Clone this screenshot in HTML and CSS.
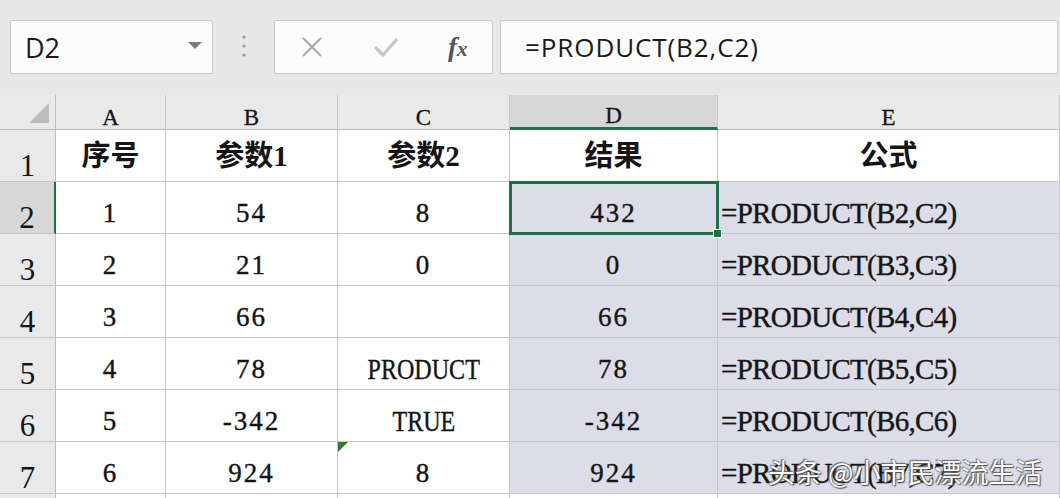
FILE: index.html
```html
<!DOCTYPE html>
<html lang="zh">
<head>
<meta charset="utf-8">
<title>PRODUCT</title>
<link rel="stylesheet" href="styles.css">
</head>
<body>
<div class="app">
  <div class="toolbar">
    <div class="namebox">
      <span class="name">D2</span>
      <svg class="caret" width="14" height="7" viewBox="0 0 14 7"><path d="M0 0 H14 L7 7 Z" fill="#7a7a7a"/></svg>
    </div>
    <div class="grip">
      <svg width="4" height="24" viewBox="0 0 4 24"><circle cx="2" cy="2" r="1.6" fill="#9a9a9a"/><circle cx="2" cy="11" r="1.6" fill="#9a9a9a"/><circle cx="2" cy="20" r="1.6" fill="#9a9a9a"/></svg>
    </div>
    <div class="fxbtns">
      <svg class="btn" width="24" height="24" viewBox="0 0 24 24"><path d="M3 3 L21 21 M21 3 L3 21" stroke="#a8a8a8" stroke-width="2" fill="none"/></svg>
      <svg class="btn" width="26" height="22" viewBox="0 0 26 22"><path d="M2 11 L10 19 L24 3" stroke="#c6c6c6" stroke-width="3.2" fill="none" stroke-linejoin="round"/></svg>
      <span class="fx">f<span class="fxx">x</span></span>
    </div>
    <div class="formula">=PRODUCT(B2,C2)</div>
  </div>

  <div class="sheet">
    <div class="corner"><svg width="20" height="20" viewBox="0 0 20 20"><path d="M20 0 V20 H0 Z" fill="#bdbdbd"/></svg></div>
    <div class="colhead">A</div>
    <div class="colhead">B</div>
    <div class="colhead">C</div>
    <div class="colhead sel">D</div>
    <div class="colhead">E</div>

    <div class="rowhead">1</div>
    <div class="cell hd">序号</div>
    <div class="cell hd">参数1</div>
    <div class="cell hd">参数2</div>
    <div class="cell hd">结果</div>
    <div class="cell hd">公式</div>

    <div class="rowhead sel">2</div>
    <div class="cell">1</div>
    <div class="cell">54</div>
    <div class="cell">8</div>
    <div class="cell res active">432</div>
    <div class="cell res fm">=PRODUCT(B2,C2)</div>

    <div class="rowhead">3</div>
    <div class="cell">2</div>
    <div class="cell">21</div>
    <div class="cell">0</div>
    <div class="cell res">0</div>
    <div class="cell res fm">=PRODUCT(B3,C3)</div>

    <div class="rowhead">4</div>
    <div class="cell">3</div>
    <div class="cell">66</div>
    <div class="cell"></div>
    <div class="cell res">66</div>
    <div class="cell res fm">=PRODUCT(B4,C4)</div>

    <div class="rowhead">5</div>
    <div class="cell">4</div>
    <div class="cell">78</div>
    <div class="cell txt"><span class="cond">PRODUCT</span></div>
    <div class="cell res">78</div>
    <div class="cell res fm">=PRODUCT(B5,C5)</div>

    <div class="rowhead">6</div>
    <div class="cell">5</div>
    <div class="cell">-342</div>
    <div class="cell txt"><span class="cond">TRUE</span></div>
    <div class="cell res">-342</div>
    <div class="cell res fm">=PRODUCT(B6,C6)</div>

    <div class="rowhead">7</div>
    <div class="cell">6</div>
    <div class="cell">924</div>
    <div class="cell flag">8</div>
    <div class="cell res">924</div>
    <div class="cell res fm">=PRODUCT(B7,C7)</div>

    <div class="rowhead"></div>
    <div class="cell"></div>
    <div class="cell"></div>
    <div class="cell"></div>
    <div class="cell"></div>
    <div class="cell"></div>
  </div>

  <div class="watermark">头条 @小市民漂流生活</div>
</div>
</body>
</html>
```

FILE: styles.css
```css
html, body {
  margin: 0;
  padding: 0;
}
body {
  width: 1060px;
  height: 498px;
  overflow: hidden;
  background: #e7e7e7;
  font-family: "Noto Sans", "Noto Sans CJK SC", sans-serif;
}
.app {
  position: relative;
  width: 1060px;
  height: 498px;
  overflow: hidden;
}

/* ---------- toolbar ---------- */
.toolbar {
  box-sizing: border-box;
  height: 95px;
  padding: 20px 0 0 10px;
  display: flex;
  align-items: flex-start;
  background: #e7e7e7;
}
.namebox {
  box-sizing: border-box;
  width: 203px;
  height: 54px;
  background: #fcfcfc;
  border: 1px solid #c9c9c9;
  border-radius: 2px;
  display: flex;
  align-items: center;
  justify-content: space-between;
  padding: 0 10px 0 14px;
}
.name {
  font-family: "Open Sans", "Noto Sans", sans-serif;
  font-size: 27px;
  color: #1a1a1a;
}
.caret {
  margin-top: -4px;
}
.grip {
  width: 61px;
  height: 54px;
  display: flex;
  align-items: center;
  justify-content: center;
}
.fxbtns {
  box-sizing: border-box;
  width: 219px;
  height: 54px;
  background: #fcfcfc;
  border: 1px solid #c9c9c9;
  border-radius: 2px;
  display: flex;
  align-items: center;
  justify-content: space-around;
  margin-right: 7px;
}
.fx {
  font-family: "Liberation Serif", serif;
  font-style: italic;
  font-weight: bold;
  font-size: 27px;
  color: #555;
  line-height: 1;
}
.fxx {
  font-size: 21px;
}
.formula {
  box-sizing: border-box;
  flex: 1;
  height: 54px;
  margin-right: 2px;
  background: #fcfcfc;
  border: 1px solid #c9c9c9;
  border-radius: 2px;
  display: flex;
  align-items: center;
  padding-left: 24px;
  font-family: "Open Sans", "Noto Sans", sans-serif;
  font-size: 26px;
  letter-spacing: 0.9px;
  color: #1a1a1a;
}

/* ---------- sheet ---------- */
.sheet {
  display: grid;
  grid-template-columns: 56px 110px 172px 172px 208px 342px;
  grid-template-rows: 35px repeat(8, 52px);
  background: #fff;
  font-family: "Liberation Serif", "Noto Sans CJK SC", serif;
  color: #151515;
}
.sheet > div {
  box-sizing: border-box;
  border-right: 1px solid #c6c6c6;
  border-bottom: 1px solid #c6c6c6;
}
.corner {
  background: #e9e9e9;
  display: flex;
  align-items: flex-end;
  justify-content: flex-end;
  padding: 0 6px 6px 0;
  border-color: #bdbdbd !important;
}
.colhead {
  background: #e9e9e9;
  display: flex;
  align-items: flex-end;
  justify-content: center;
  font-size: 23px;
  line-height: 1;
  padding-bottom: 0;
  border-bottom-color: #bdbdbd !important;
  -webkit-text-stroke: 0.3px #151515;
}
.colhead.sel {
  background: #d7d7d7;
  border-bottom: 3px solid #1f6e45 !important;
}
.rowhead {
  background: #e9e9e9;
  display: flex;
  align-items: flex-end;
  justify-content: center;
  font-size: 31px;
  line-height: 1;
  padding-bottom: 0;
  border-right-color: #bdbdbd !important;
}
.rowhead.sel {
  background: #d7d7d7;
  border-right: 2px solid #1f6e45 !important;
}
.cell {
  display: flex;
  align-items: flex-end;
  justify-content: center;
  padding-bottom: 9px;
  font-size: 27px;
  line-height: 22px;
  letter-spacing: 2px;
  white-space: nowrap;
  -webkit-text-stroke: 0.4px #151515;
}
.cell.txt {
  font-size: 29px;
  letter-spacing: 0;
}
.cond {
  display: inline-block;
  transform: scaleX(0.83);
}
.cell.hd {
  align-items: center;
  font-family: "Liberation Serif", "Noto Sans CJK SC", serif;
  font-weight: bold;
  font-size: 29px;
  line-height: 1;
  padding: 2px 0 0;
  letter-spacing: 0;
  -webkit-text-stroke: 0;
}
.cell.res {
  background: #dddde9;
}
.cell.fm {
  justify-content: flex-start;
  padding-left: 3px;
  font-size: 29px;
  letter-spacing: -0.7px;
}
.cell.active {
  position: relative;
  z-index: 2;
  outline: 3px solid #1f6e45;
  outline-offset: -2px;
}
.cell.active::after {
  content: "";
  position: absolute;
  right: -5px;
  bottom: -5px;
  width: 7px;
  height: 7px;
  background: #1f6e45;
  border: 1px solid #fff;
}
.cell.flag {
  position: relative;
}
.cell.flag::before {
  content: "";
  position: absolute;
  left: 0;
  top: 0;
  border-top: 10px solid #2e7d32;
  border-right: 10px solid transparent;
}

/* ---------- watermark overlay ---------- */
.watermark {
  position: absolute;
  left: 768px;
  top: 452px;
  font-family: "Noto Sans CJK SC", sans-serif;
  font-size: 27px;
  color: #fff;
  white-space: nowrap;
  text-shadow: 0 0 2px #444, 1px 1px 1px #555, -1px -1px 1px #777;
}
```
